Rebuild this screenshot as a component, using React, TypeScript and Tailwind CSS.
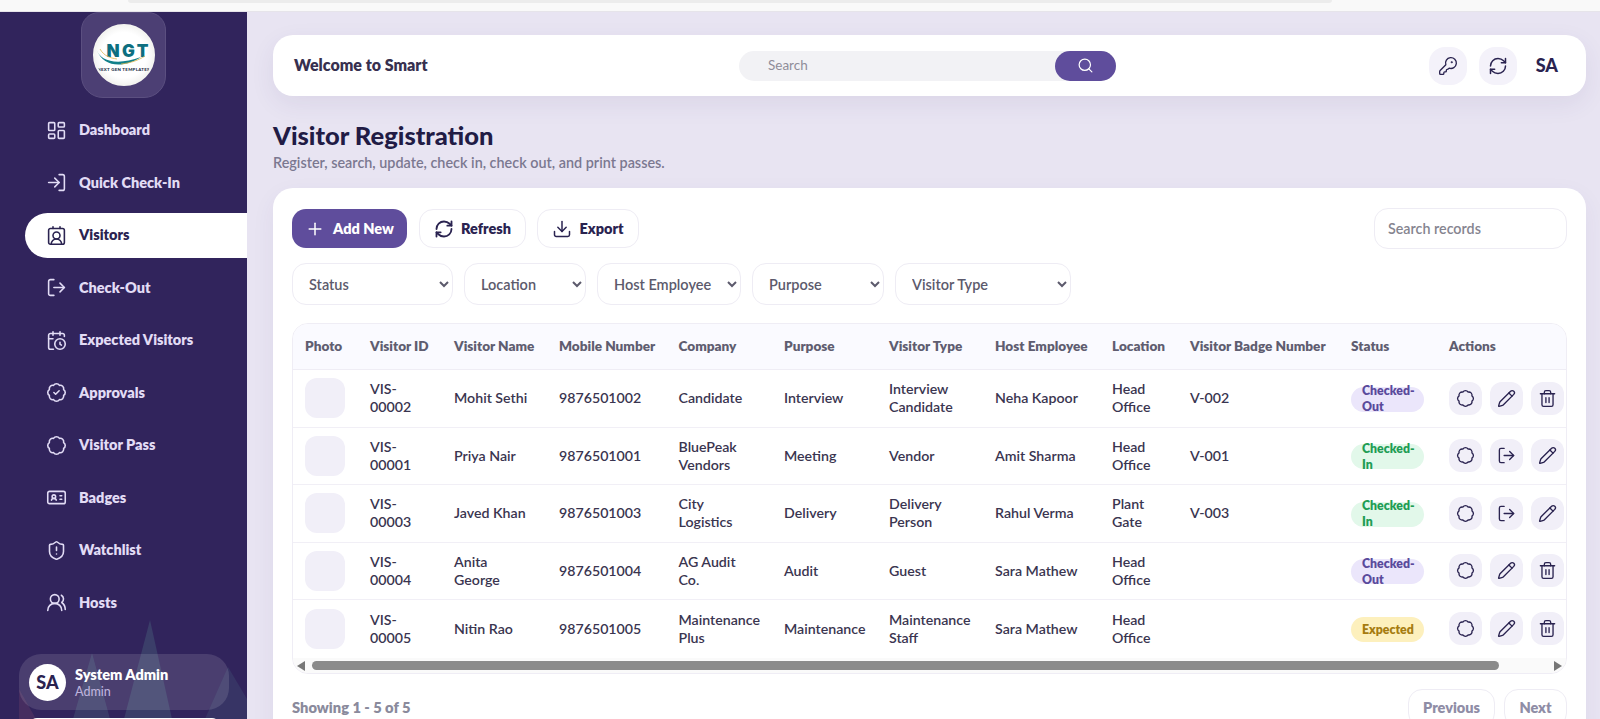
import React from 'react';
import {
  LayoutDashboard, LogIn, ContactRound, LogOut, CalendarClock, BadgeCheck, Badge, IdCard,
  ShieldAlert, UsersRound, KeyRound, RefreshCw, Search, Plus, Download, Pencil, Trash2,
} from 'lucide-react';

const navItems = [
  { label: 'Dashboard', icon: LayoutDashboard },
  { label: 'Quick Check-In', icon: LogIn },
  { label: 'Visitors', icon: ContactRound, active: true },
  { label: 'Check-Out', icon: LogOut },
  { label: 'Expected Visitors', icon: CalendarClock },
  { label: 'Approvals', icon: BadgeCheck },
  { label: 'Visitor Pass', icon: Badge },
  { label: 'Badges', icon: IdCard },
  { label: 'Watchlist', icon: ShieldAlert },
  { label: 'Hosts', icon: UsersRound },
];

const filters = [
  { label: 'Status', width: 'w-[161px]' },
  { label: 'Location', width: 'w-[122px]' },
  { label: 'Host Employee', width: 'w-[144px]' },
  { label: 'Purpose', width: 'w-[132px]' },
  { label: 'Visitor Type', width: 'w-[176px]' },
];

const columns = [
  { label: 'Photo', width: 'w-[65px]' },
  { label: 'Visitor ID', width: 'w-[84px]' },
  { label: 'Visitor Name', width: 'w-[105px]' },
  { label: 'Mobile Number', width: 'w-[119.5px]' },
  { label: 'Company', width: 'w-[105.5px]' },
  { label: 'Purpose', width: 'w-[105px]' },
  { label: 'Visitor Type', width: 'w-[106px]' },
  { label: 'Host Employee', width: 'w-[117px]' },
  { label: 'Location', width: 'w-[78px]' },
  { label: 'Visitor Badge Number', width: 'w-[161px]' },
  { label: 'Status', width: 'w-[98px]' },
  { label: 'Actions', width: 'w-[130px]' },
];

const rows = [
  { id: 'VIS-00002', name: 'Mohit Sethi', mobile: '9876501002', company: 'Candidate', purpose: 'Interview', type: 'Interview Candidate', host: 'Neha Kapoor', location: 'Head Office', badge: 'V-002', status: 'Checked-Out' },
  { id: 'VIS-00001', name: 'Priya Nair', mobile: '9876501001', company: 'BluePeak Vendors', purpose: 'Meeting', type: 'Vendor', host: 'Amit Sharma', location: 'Head Office', badge: 'V-001', status: 'Checked-In' },
  { id: 'VIS-00003', name: 'Javed Khan', mobile: '9876501003', company: 'City\nLogistics', purpose: 'Delivery', type: 'Delivery Person', host: 'Rahul Verma', location: 'Plant Gate', badge: 'V-003', status: 'Checked-In' },
  { id: 'VIS-00004', name: 'Anita George', mobile: '9876501004', company: 'AG Audit\nCo.', purpose: 'Audit', type: 'Guest', host: 'Sara Mathew', location: 'Head Office', badge: '', status: 'Checked-Out' },
  { id: 'VIS-00005', name: 'Nitin Rao', mobile: '9876501005', company: 'Maintenance Plus', purpose: 'Maintenance', type: 'Maintenance Staff', host: 'Sara Mathew', location: 'Head Office', badge: '', status: 'Expected' },
];

const statusStyles: Record<string, string> = {
  'Checked-Out': 'bg-[#ebe6fb] text-[#5a4a9c]',
  'Checked-In': 'bg-[#e2f8ea] text-[#1f9d55]',
  Expected: 'bg-[#fdf0bd] text-[#a67c10]',
};

const ActionButton = ({ icon: Icon }: { icon: React.ElementType }) => (
  <div className="w-[33px] h-[33px] rounded-xl bg-[#f1eff8] flex items-center justify-center shrink-0">
    <Icon size={19} strokeWidth={1.7} className="text-[#2a2350]" />
  </div>
);

const Logo = () => (
  <div className="w-[62px] h-[62px] rounded-full bg-[radial-gradient(circle,#ffffff_55%,#e2e2de_100%)] border-2 border-[#f4f4f1] overflow-hidden relative">
    <div className="absolute left-[12px] top-[17px] text-[17px] font-['Inter',sans-serif] font-black tracking-[2.5px] leading-none text-[#0d6f80]">NGT</div>
    <svg viewBox="0 0 62 20" className="absolute left-0 top-[22px] w-[62px] h-5">
      <path d="M2 2C5 13 22 18 46 9C30 20 8 20 2 2Z" fill="#12808a" />
      <path d="M5 1C9 8 15 10 22 11" stroke="#e0b64c" strokeWidth="0.8" fill="none" />
      <path d="M26 16C36 15 44 12 50 8" stroke="#e0b64c" strokeWidth="0.8" fill="none" />
    </svg>
    <div className="absolute left-0 right-0 top-[42px] text-center text-[4.4px] font-black tracking-[0.3px] leading-none text-[#26304a]">NEXT GEN TEMPLATES</div>
  </div>
);

const Sidebar = () => (
  <aside className="w-[247px] h-full shrink-0 bg-[#31245c] relative overflow-hidden flex flex-col">
    <svg className="absolute left-0 bottom-0 w-[247px] h-[110px]" viewBox="0 0 247 110">
      <path d="M150 11L124 110H172Z" fill="#5f9a9a" fillOpacity="0.22" />
      <path d="M92 44L73 110H110Z" fill="#5f9a9a" fillOpacity="0.2" />
      <path d="M228 58L205 110H247V90Z" fill="#5f9a9a" fillOpacity="0.14" />
      <path d="M19 80L19 110H36Z" fill="#c46a7a" fillOpacity="0.14" />
    </svg>
    <div className="w-[85px] h-[86px] ml-[81px] rounded-b-[22px] rounded-t-[18px] bg-[#4c3f74] border border-[#5b4f80] flex items-center justify-center shrink-0">
      <Logo />
    </div>
    <nav className="mt-[9.5px] flex flex-col gap-[7.5px] pl-[25px]">
      {navItems.map(({ label, icon: Icon, active }) => (
        <div
          key={label}
          className={`h-[45px] flex items-center gap-[12px] pl-[21px] rounded-l-full text-[14.5px] font-extrabold ${
            active ? 'bg-white text-[#2a2350]' : 'text-[#e2dcf5]'
          }`}
        >
          <Icon size={21} strokeWidth={1.8} className="shrink-0" />
          <span>{label}</span>
        </div>
      ))}
    </nav>
    <div className="absolute left-[19px] top-[642px] w-[210px] h-[56px] rounded-[22px] bg-white/12 flex items-center gap-[9px] pl-[10px]">
      <div className="w-[37px] h-[37px] rounded-full bg-white text-[#2a2350] flex items-center justify-center text-[18px] font-black">SA</div>
      <div>
        <div className="text-[14.5px] font-extrabold text-white leading-[19px]">System Admin</div>
        <div className="text-[12.5px] font-medium text-[#bdb3dc] leading-[16px]">Admin</div>
      </div>
    </div>
    <div className="absolute left-[29px] top-[706px] w-[191px] h-4 rounded-t-lg bg-white" />
  </aside>
);

const TopBar = () => (
  <header className="h-[61px] rounded-[20px] bg-white shadow-[0_8px_24px_rgba(60,45,120,0.08)] flex items-center pl-[21px] pr-[28px]">
    <div className="w-[445px] pb-[2px] text-[16px] font-extrabold text-[#37304f]">Welcome to Smart</div>
    <div className="w-[377px] h-[30px] rounded-full bg-[#f2f2f5] flex items-center justify-between pl-[29px]">
      <span className="text-[13.5px] text-[#8f8d99]">Search</span>
      <div className="w-[61px] h-[30px] rounded-full bg-[#5f4d9c] flex items-center justify-center">
        <Search size={17} strokeWidth={1.7} className="text-white" />
      </div>
    </div>
    <div className="ml-auto flex items-center gap-3">
      <div className="w-[38px] h-[38px] rounded-2xl bg-[#f4f2fa] flex items-center justify-center">
        <KeyRound size={20} strokeWidth={1.6} className="text-[#2a2350]" />
      </div>
      <div className="w-[38px] h-[38px] rounded-2xl bg-[#f4f2fa] flex items-center justify-center">
        <RefreshCw size={20} strokeWidth={1.8} className="text-[#2a2350]" />
      </div>
      <div className="ml-[7px] text-[18px] font-black text-[#2a2350]">SA</div>
    </div>
  </header>
);

const Toolbar = () => (
  <div className="flex items-center">
    <div className="w-[115px] h-[39px] rounded-[14px] bg-[#5f4d9c] flex items-center justify-center gap-[8px] text-white text-[14.5px] font-extrabold">
      <Plus size={20} strokeWidth={1.8} />
      Add New
    </div>
    <div className="ml-3 w-[107px] h-[39px] rounded-[14px] border border-[#eeecf4] flex items-center justify-center gap-[7px] text-[#2a2350] text-[14.5px] font-extrabold">
      <RefreshCw size={20} strokeWidth={2.2} />
      Refresh
    </div>
    <div className="ml-[11px] w-[102px] h-[39px] rounded-[14px] border border-[#eeecf4] flex items-center justify-center gap-[7px] text-[#2a2350] text-[14.5px] font-extrabold">
      <Download size={20} strokeWidth={1.8} />
      Export
    </div>
    <div className="ml-auto w-[193px] h-[41px] rounded-[14px] border border-[#eeecf4] flex items-center pl-[13px] text-[14.3px] font-semibold text-[#85848f]">
      Search records
    </div>
  </div>
);

const Filters = () => (
  <div className="mt-[14px] flex gap-[11px]">
    {filters.map((f) => (
      <select
        key={f.label}
        defaultValue={f.label}
        className={`${f.width} h-[42px] rounded-[14px] border border-[#eeecf4] bg-white pl-3 pr-[6px] text-[14.5px] font-semibold text-[#5c5a6c]`}
      >
        <option>{f.label}</option>
      </select>
    ))}
  </div>
);

const RecordsTable = () => (
  <div className="mt-[18px] h-[351px] rounded-2xl border border-[#efedf5] overflow-hidden flex flex-col">
    <table className="table-fixed w-[1274px] shrink-0 border-collapse">
      <colgroup>
        {columns.map((c) => (
          <col key={c.label} className={c.width} />
        ))}
      </colgroup>
      <thead>
        <tr className="h-[45.5px] bg-[#fafaff] border-b border-[#efedf5]">
          {columns.map((c) => (
            <th key={c.label} className="pl-3 text-left text-[13.6px] font-extrabold text-[#5f5d70] whitespace-nowrap">
              {c.label}
            </th>
          ))}
        </tr>
      </thead>
      <tbody>
        {rows.map((r) => (
          <tr key={r.id} className="h-[57.5px] border-b border-[#f1eff6] last:border-b-0 text-[14.2px] leading-[18px] font-semibold text-[#3a3550]">
            <td className="pl-3">
              <div className="w-10 h-10 rounded-xl bg-[#f1eff8]" />
            </td>
            <td className="pl-3 pr-3">{r.id}</td>
            <td className="pl-3 pr-3">{r.name}</td>
            <td className="pl-3">{r.mobile}</td>
            <td className="pl-3 whitespace-pre-line">{r.company}</td>
            <td className="pl-3">{r.purpose}</td>
            <td className="pl-3 pr-1">{r.type}</td>
            <td className="pl-3">{r.host}</td>
            <td className="pl-3 pr-2">{r.location}</td>
            <td className="pl-3">{r.badge}</td>
            <td className="pl-3">
              <div className={`mt-[2px] w-[73px] h-[25px] rounded-full flex items-center pl-[11px] pr-1 text-[12.3px] leading-4 font-extrabold ${statusStyles[r.status]}`}>
                <span>{r.status}</span>
              </div>
            </td>
            <td className="pl-3">
              <div className="flex gap-2">
                <ActionButton icon={Badge} />
                {r.status === 'Checked-In' ? (
                  <>
                    <ActionButton icon={LogOut} />
                    <ActionButton icon={Pencil} />
                  </>
                ) : (
                  <>
                    <ActionButton icon={Pencil} />
                    <ActionButton icon={Trash2} />
                  </>
                )}
              </div>
            </td>
          </tr>
        ))}
      </tbody>
    </table>
    <div className="mt-auto h-[15px] bg-[#fafafa] flex items-center px-[4px] gap-[6px]">
      <svg width="9" height="10" viewBox="0 0 9 10" className="shrink-0"><path d="M8 0V10L0 5Z" fill="#777" /></svg>
      <div className="h-[9px] flex-1 rounded-full bg-[#8b8b8b] mr-[48px]" />
      <svg width="9" height="10" viewBox="0 0 9 10" className="shrink-0"><path d="M1 0V10L9 5Z" fill="#777" /></svg>
    </div>
  </div>
);

const App = () => {
  return (
    <div className="w-[1600px] h-[719px] overflow-hidden bg-[#e8e4f2] flex flex-col font-['Lato',sans-serif]">
      <div className="h-3 shrink-0 bg-[#f9f9f9] border-b border-[#e6e4ea] pl-[128px] pr-[268px]">
        <div className="h-[3px] rounded-b-full bg-[#ececec]" />
      </div>
      <div className="flex-1 min-h-0 flex">
        <Sidebar />
        <main className="flex-1 min-w-0 pl-[26px] pr-[14px] pt-[23px]">
          <TopBar />
          <h1 className="mt-[23px] text-[25.5px] leading-[32px] font-black text-[#211b45]">Visitor Registration</h1>
          <p className="mt-[3px] text-[14.4px] leading-[18px] font-semibold text-[#7b7890]">
            Register, search, update, check in, check out, and print passes.
          </p>
          <section className="mt-[16px] rounded-t-[20px] bg-white h-[560px] pl-[19px] pr-[19px] pt-5 shadow-[0_8px_24px_rgba(60,45,120,0.06)]">
            <Toolbar />
            <Filters />
            <RecordsTable />
            <div className="mt-[15px] flex items-start justify-between">
              <div className="mt-[7px] text-[14.7px] font-extrabold text-[#8a8a9c]">Showing 1 - 5 of 5</div>
              <div className="flex gap-[9px]">
                <div className="w-[87px] h-[38px] rounded-[14px] border border-[#eeecf4] flex items-center justify-center text-[14.5px] font-extrabold text-[#8f8da6]">Previous</div>
                <div className="w-[63px] h-[38px] rounded-[14px] border border-[#eeecf4] flex items-center justify-center text-[14.5px] font-extrabold text-[#8f8da6]">Next</div>
              </div>
            </div>
          </section>
        </main>
      </div>
    </div>
  );
};

export default App;
